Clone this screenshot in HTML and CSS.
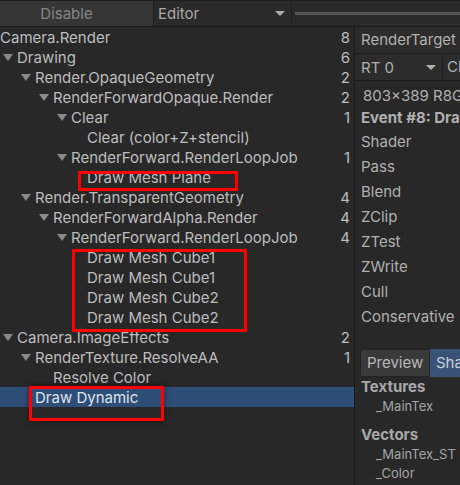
FILE: index.html
```html
<!DOCTYPE html>
<html>
<head>
<meta charset="utf-8">
<link rel="stylesheet" href="styles.css">
</head>
<body>
<div class="app">
  <div class="toolbar">
    <div class="btn-disable">Disable</div>
    <div class="editor-field">
      <span>Editor</span>
      <svg class="dd-arrow" width="10" height="5" viewBox="0 0 10 5"><polygon points="0,0 10,0 5,5" fill="#b0b0b0"/></svg>
    </div>
    <div class="slider"><div class="track"></div></div>
  </div>
  <div class="main">
    <div class="tree">
      <div class="row d0"><span class="label">Camera.Render</span><span class="count">8</span></div>
      <div class="row d1"><svg class="arrow" viewBox="0 0 10 7"><polygon points="0,0 10,0 5,7"/></svg><span class="label">Drawing</span><span class="count">6</span></div>
      <div class="row d2"><svg class="arrow" viewBox="0 0 10 7"><polygon points="0,0 10,0 5,7"/></svg><span class="label">Render.OpaqueGeometry</span><span class="count">2</span></div>
      <div class="row d3"><svg class="arrow" viewBox="0 0 10 7"><polygon points="0,0 10,0 5,7"/></svg><span class="label">RenderForwardOpaque.Render</span><span class="count">2</span></div>
      <div class="row d4"><svg class="arrow" viewBox="0 0 10 7"><polygon points="0,0 10,0 5,7"/></svg><span class="label">Clear</span><span class="count">1</span></div>
      <div class="row d5"><span class="spacer"></span><span class="label">Clear (color+Z+stencil)</span><span class="count"></span></div>
      <div class="row d4"><svg class="arrow" viewBox="0 0 10 7"><polygon points="0,0 10,0 5,7"/></svg><span class="label">RenderForward.RenderLoopJob</span><span class="count">1</span></div>
      <div class="row d5"><span class="spacer"></span><span class="label">Draw Mesh Plane</span><span class="count"></span></div>
      <div class="row d2"><svg class="arrow" viewBox="0 0 10 7"><polygon points="0,0 10,0 5,7"/></svg><span class="label">Render.TransparentGeometry</span><span class="count">4</span></div>
      <div class="row d3"><svg class="arrow" viewBox="0 0 10 7"><polygon points="0,0 10,0 5,7"/></svg><span class="label">RenderForwardAlpha.Render</span><span class="count">4</span></div>
      <div class="row d4"><svg class="arrow" viewBox="0 0 10 7"><polygon points="0,0 10,0 5,7"/></svg><span class="label">RenderForward.RenderLoopJob</span><span class="count">4</span></div>
      <div class="row d5"><span class="spacer"></span><span class="label">Draw Mesh Cube1</span><span class="count"></span></div>
      <div class="row d5"><span class="spacer"></span><span class="label">Draw Mesh Cube1</span><span class="count"></span></div>
      <div class="row d5"><span class="spacer"></span><span class="label">Draw Mesh Cube2</span><span class="count"></span></div>
      <div class="row d5"><span class="spacer"></span><span class="label">Draw Mesh Cube2</span><span class="count"></span></div>
      <div class="row d1"><svg class="arrow" viewBox="0 0 10 7"><polygon points="0,0 10,0 5,7"/></svg><span class="label">Camera.ImageEffects</span><span class="count">2</span></div>
      <div class="row d2"><svg class="arrow" viewBox="0 0 10 7"><polygon points="0,0 10,0 5,7"/></svg><span class="label">RenderTexture.ResolveAA</span><span class="count">1</span></div>
      <div class="row d3"><span class="spacer"></span><span class="label">Resolve Color</span><span class="count"></span></div>
      <div class="row d2 selected"><span class="spacer"></span><span class="label">Draw Dynamic</span><span class="count"></span></div>

      <div class="mark mark-plane"></div>
      <div class="mark mark-cubes"></div>
      <div class="mark mark-dynamic"></div>
    </div>
    <div class="inspector">
      <div class="insp-header">RenderTarget</div>
      <div class="insp-rt">
        <div class="rt-drop"><span>RT 0</span><svg class="dd-arrow" width="10" height="5" viewBox="0 0 10 5"><polygon points="0,0 10,0 5,5" fill="#b0b0b0"/></svg></div>
        <div class="rt-ch">Channels</div>
      </div>
      <div class="insp-line res">803x389 R8G8B8A8_UNORM</div>
      <div class="insp-line event">Event #8: Draw Dynamic</div>
      <div class="props">
        <div class="prop">Shader</div>
        <div class="prop">Pass</div>
        <div class="prop">Blend</div>
        <div class="prop">ZClip</div>
        <div class="prop">ZTest</div>
        <div class="prop">ZWrite</div>
        <div class="prop">Cull</div>
        <div class="prop">Conservative</div>
      </div>
      <div class="tabs">
        <div class="tab tab-preview">Preview</div>
        <div class="tab tab-shader">ShaderProperties</div>
      </div>
      <div class="section">Textures</div>
      <div class="item">_MainTex</div>
      <div class="section sec2">Vectors</div>
      <div class="item">_MainTex_ST</div>
      <div class="item">_Color</div>
    </div>
  </div>
</div>
</body>
</html>
```

FILE: styles.css
```css
html, body {
  margin: 0;
  padding: 0;
  background: #282828;
}
body {
  width: 460px;
  height: 485px;
  overflow: hidden;
  font-family: Inter, "Noto Sans", sans-serif;
  font-size: 15px;
  color: #bdbdbd;
}
.app {
  width: 460px;
  height: 485px;
  display: flex;
  flex-direction: column;
}
.toolbar {
  height: 25px;
  border-top: 1px solid #1e1e1e;
  border-bottom: 1px solid #1a1a1a;
  background: #2a2a2a;
  display: flex;
  flex: none;
}
.btn-disable {
  width: 154px;
  box-sizing: border-box;
  padding-right: 20px;
  background: #363636;
  color: #868686;
  display: flex;
  align-items: center;
  justify-content: center;
  border-right: 1px solid #1f1f1f;
}
.editor-field {
  width: 138px;
  background: #2a2a2a;
  color: #a8a8a8;
  display: flex;
  align-items: center;
  padding-left: 4px;
  box-sizing: border-box;
  border-right: 1px solid #1f1f1f;
}
.editor-field span { flex: 1; }
.dd-arrow { margin-right: 6px; }
.slider {
  flex: 1;
  display: flex;
  align-items: center;
  padding-left: 3px;
}
.track {
  flex: 1;
  height: 3px;
  background: #545454;
}
.main {
  flex: 1;
  display: flex;
  min-height: 0;
}
.tree {
  width: 354px;
  flex: none;
  position: relative;
  border-right: 1px solid #1a1a1a;
  background: #282828;
}
.row {
  height: 20px;
  display: flex;
  align-items: center;
  white-space: nowrap;
}
.row .label { flex: 1; }
.row .count {
  width: 20px;
  text-align: right;
  padding-right: 4px;
}
.arrow {
  width: 10px;
  height: 7px;
  fill: #8a8a8a;
  margin-right: 4px;
  flex: none;
}
.spacer {
  width: 14px;
  flex: none;
}
.d0 { padding-left: 0; }
.d1 { padding-left: 3px; }
.d2 { padding-left: 21px; }
.d3 { padding-left: 39px; }
.d4 { padding-left: 57px; }
.d5 { padding-left: 73px; }
.row.selected {
  background: #2f4e77;
  color: #dde4ec;
}
.mark {
  position: absolute;
  border: 3px solid #ff0000;
  box-sizing: border-box;
}
.mark-plane { left: 78px; top: 144px; width: 160px; height: 20px; }
.mark-cubes { left: 72px; top: 222px; width: 175px; height: 83px; }
.mark-dynamic {
  left: 29px; top: 359px; width: 135px; height: 35px;
  box-shadow: 0 0 6px rgba(0,0,0,0.5);
}
.inspector {
  flex: 1;
  min-width: 0;
  overflow: hidden;
  background: #282828;
  color: #b0b0b0;
  white-space: nowrap;
}
.insp-header {
  height: 26px;
  line-height: 26px;
  padding-left: 6px;
  background: #2c2c2c;
  border-bottom: 1px solid #1c1c1c;
}
.insp-rt {
  height: 26px;
  display: flex;
  border-bottom: 1px solid #1c1c1c;
}
.rt-drop {
  width: 88px;
  flex: none;
  display: flex;
  align-items: center;
  padding-left: 6px;
  box-sizing: border-box;
  background: #2c2c2c;
  border-right: 1px solid #1c1c1c;
}
.rt-drop span { flex: 1; }
.rt-ch {
  padding-left: 4px;
  line-height: 26px;
  background: #2c2c2c;
  flex: 1;
}
.insp-line {
  padding-left: 8px;
  height: 22px;
  line-height: 22px;
}
.res { margin-top: 4px; }
.event {
  font-weight: 700;
  padding-left: 6px;
}
.prop {
  height: 25px;
  line-height: 25px;
  padding-left: 6px;
}
.tabs {
  display: flex;
  margin-top: 20px;
  margin-left: 5px;
  height: 28px;
}
.tab {
  line-height: 28px;
  padding: 0 6px;
  box-sizing: border-box;
}
.tab-preview {
  background: #3a3a3a;
  border: 1px solid #232323;
  border-radius: 3px 0 0 0;
  width: 70px;
  flex: none;
  line-height: 26px;
  color: #b8b8b8;
}
.tab-shader {
  background: #3a5275;
  color: #c8d0da;
}
.section {
  font-weight: 700;
  padding-left: 6px;
  height: 20px;
  line-height: 20px;
  color: #a8a8a8;
}
.sec2 { margin-top: 9px; }
.item {
  font-size: 13px;
  padding-left: 21px;
  height: 19px;
  line-height: 19px;
  color: #a4a4a4;
}
```
